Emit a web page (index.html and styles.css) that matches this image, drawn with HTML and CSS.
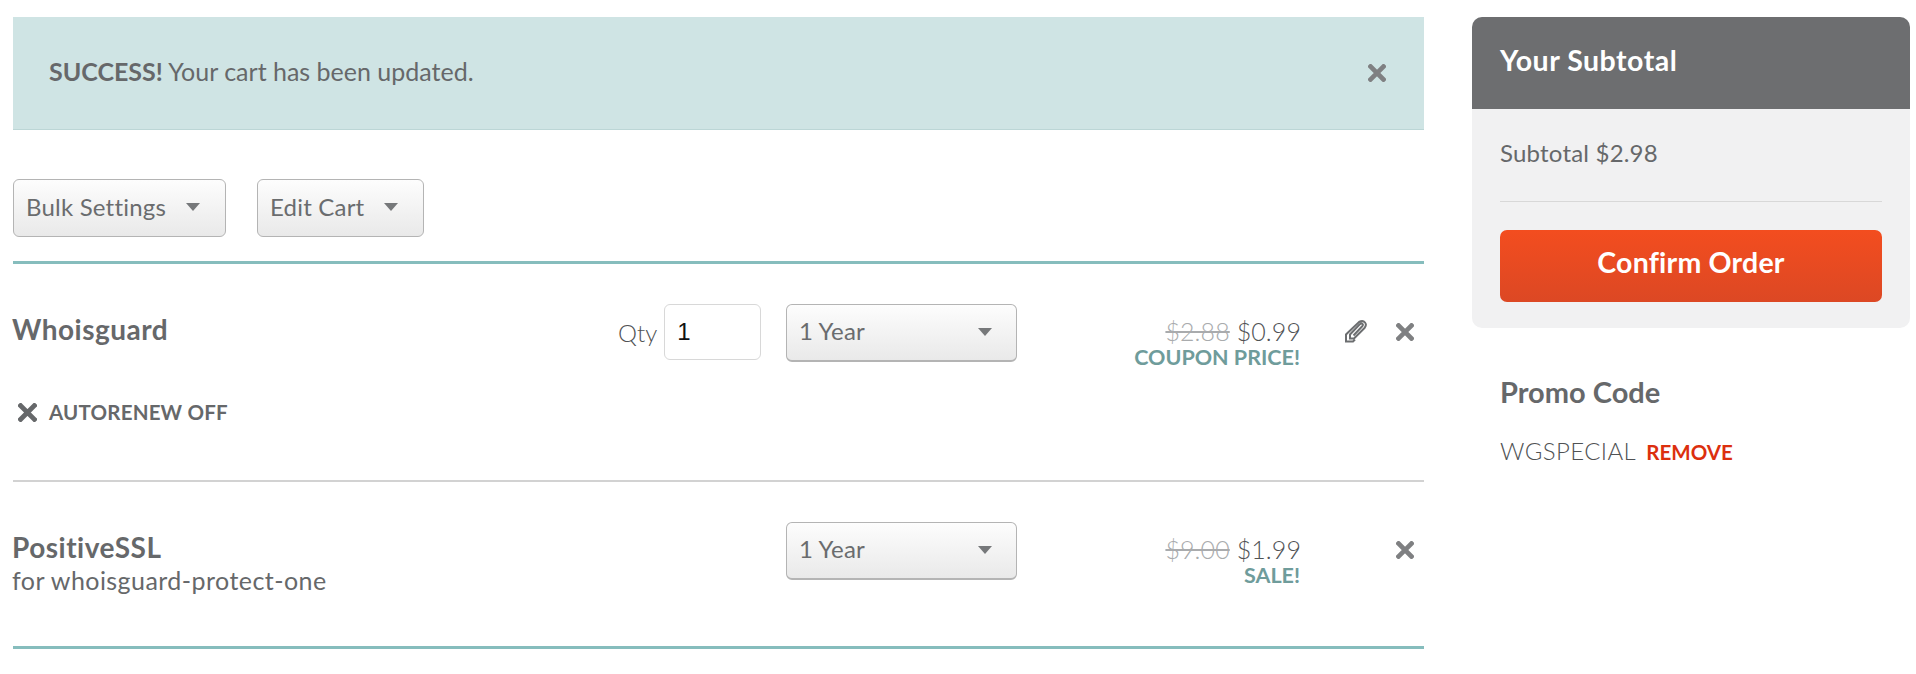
FILE: index.html
```html
<!DOCTYPE html>
<html lang="en">
<head>
<meta charset="utf-8">
<title>Cart</title>
<link rel="stylesheet" href="styles.css">
</head>
<body>
<div class="page">
  <main class="main">
    <div class="alert">
      <p class="alert-text"><strong>SUCCESS!</strong> Your cart has been updated.</p>
      <svg class="icon-x alert-close" viewBox="0 0 18 18"><path d="M2.500 2.500 15.500 15.500M15.500 2.500 2.500 15.500"/></svg>
    </div>
    <div class="toolbar">
      <button class="drop bulk">Bulk Settings<span class="caret"></span></button>
      <button class="drop edit">Edit Cart<span class="caret"></span></button>
    </div>
    <section class="cart">
      <div class="row row-first">
        <div class="name-cell">
          <h3 class="name">Whoisguard</h3>
          <div class="renew"><svg class="icon-x renew-x" viewBox="0 0 18 18"><path d="M2.500 2.500 15.500 15.500M15.500 2.500 2.500 15.500"/></svg>AUTORENEW OFF</div>
        </div>
        <div class="qty-cell"><label class="qty-label">Qty</label><input class="qty" value="1"></div>
        <button class="drop period">1 Year<span class="caret"></span></button>
        <div class="price">
          <div class="price-line"><s>$2.88</s> $0.99</div>
          <div class="price-tag">COUPON PRICE!</div>
        </div>
        <div class="actions">
          <svg class="icon-clip" viewBox="0 0 24 24"><path d="M9.500 15.500 18 6.500Q19.500 5 18.500 4T15.500 4.500L6 14.500 6 18.500 10 18.500 20.500 8Q23 5 21 2.500T15 2L3.500 13 2 14.500V21.500H9L11 19.500"/></svg>
          <svg class="icon-x" viewBox="0 0 18 18"><path d="M2.500 2.500 15.500 15.500M15.500 2.500 2.500 15.500"/></svg>
        </div>
      </div>
      <div class="row row-second">
        <div class="name-cell">
          <h3 class="name">PositiveSSL</h3>
          <div class="sub">for whoisguard-protect-one</div>
        </div>
        <div class="qty-cell"></div>
        <button class="drop period">1 Year<span class="caret"></span></button>
        <div class="price">
          <div class="price-line"><s>$9.00</s> $1.99</div>
          <div class="price-tag">SALE!</div>
        </div>
        <div class="actions">
          <svg class="icon-x" viewBox="0 0 18 18"><path d="M2.500 2.500 15.500 15.500M15.500 2.500 2.500 15.500"/></svg>
        </div>
      </div>
    </section>
  </main>
  <aside class="side">
    <div class="card">
      <h2 class="card-head">Your Subtotal</h2>
      <div class="card-body">
        <p class="subtotal">Subtotal $2.98</p>
        <button class="confirm">Confirm Order</button>
      </div>
    </div>
    <div class="promo">
      <h3 class="promo-title">Promo Code</h3>
      <p class="promo-code">WGSPECIAL <a class="remove">REMOVE</a></p>
    </div>
  </aside>
</div>
</body>
</html>
```
FILE: styles.css
```css
* { box-sizing: border-box; }
html, body { margin: 0; background: #fff; }
body { font-family: Lato, "Open Sans", sans-serif; color: #66686a; height: 674px; overflow: hidden; }
p, h2, h3 { margin: 0; }
.page { display: flex; gap: 48px; padding: 17px 6px 0 13px; }
.main { width: 1411px; flex: none; }
.side { width: 438px; flex: none; }

.alert { height: 113px; background: #cfe4e4; border-bottom: 1px solid #bcd6d6; display: flex; align-items: center; justify-content: space-between; padding: 0 38px 0 36px; }
.alert-text { font-size: 25px; line-height: 30px; padding-bottom: 4px; }
.alert-text strong { font-weight: 700; }
.alert-close { width: 22px; height: 22px; }

.icon-x { width: 18px; height: 18px; fill: none; stroke: #7f8082; stroke-width: 4.600; stroke-linecap: square; flex: none; }
.icon-clip { width: 24px; height: 24px; fill: none; stroke: #6c6e70; stroke-width: 2; flex: none; }

.toolbar { display: flex; gap: 31px; padding: 49px 0 24px; border-bottom: 3px solid #86bdbd; }
.drop { display: flex; align-items: center; justify-content: space-between; height: 58px; border: 1px solid #b4b4b4; border-radius: 6px; background: linear-gradient(#fdfdfd, #e9e9e9); font: 400 24px Lato, sans-serif; letter-spacing: .2px; color: #6a6c6e; padding: 0 15px 4px 13px; }
.caret { width: 0; height: 0; border-left: 7.500px solid transparent; border-right: 7.500px solid transparent; border-top: 8px solid #76787a; margin-top: 2px; }
.bulk { width: 213px; padding-left: 12px; padding-right: 25px; }
.edit { width: 167px; padding-left: 12px; padding-right: 25px; }
.period { width: 231px; border-bottom-width: 2px; padding-left: 12px; padding-right: 24px; }

.row { display: grid; grid-template-columns: 605px 168px 231px 283px 124px; padding-top: 40px; align-items: start; }
.row-first { height: 218px; border-bottom: 2px solid #d2d2d2; }
.row-second { height: 167px; border-bottom: 3px solid #86bdbd; }
.name { font-size: 28px; line-height: 34px; font-weight: 700; letter-spacing: .5px; margin: 8px 0 0 -1px; }
.sub { font-size: 25px; line-height: 30px; font-weight: 400; letter-spacing: .45px; margin: 1px 0 0 -1px; }
.qty-cell { display: flex; align-items: center; gap: 7px; }
.qty-label { font-size: 24px; font-weight: 300; color: #505254; }
.qty { width: 97px; height: 56px; border: 1px solid #d8d8d8; border-radius: 6px; padding: 0 12px; font: 400 24px "Liberation Sans", sans-serif; color: #111; outline: none; }
.price { text-align: right; margin-top: 12px; }
.price-line { font-size: 25px; line-height: 30px; font-weight: 300; letter-spacing: .1px; color: #505254; margin-right: -1px; }
.price-line s { color: #a9abad; }
.price-tag { font-size: 21.500px; line-height: 24px; font-weight: 700; color: #6f9c9b; margin-top: -1px; }
.actions { display: flex; justify-content: flex-end; align-items: center; gap: 28px; height: 56px; padding: 0 10px 0 0; }
.renew { display: flex; align-items: center; gap: 12px; margin: 53px 0 0 5px; font-size: 20.500px; line-height: 26px; font-weight: 700; letter-spacing: .2px; }
.renew-x { width: 19px; height: 19px; stroke: #66686a; }

.card { background: #f1f1f2; border-radius: 10px; overflow: hidden; height: 311px; }
.card-head { height: 92px; background: #6d6e70; color: #fff; font-size: 28.500px; font-weight: 700; line-height: 86px; padding-left: 28px; letter-spacing: .5px; }
.card-body { padding: 0 28px; }
.subtotal { font-size: 24px; line-height: 30px; font-weight: 400; letter-spacing: .2px; padding: 29px 0 24px; border-bottom: 1px solid #d8d8d8; height: 93px; }
.confirm { display: block; width: 100%; height: 72px; margin-top: 28px; border: 0; border-radius: 7px; background: linear-gradient(#f34d1f, #dc4824); color: #fff; font: 700 28.500px Lato, sans-serif; letter-spacing: .2px; padding-bottom: 10px; }
.promo { padding: 47px 28px 0; }
.promo-title { font-size: 29px; line-height: 34px; font-weight: 700; }
.promo-code { font-size: 24px; line-height: 30px; font-weight: 300; margin-top: 27px; letter-spacing: .4px; color: #505254; }
.remove { color: #dc2f0e; font-size: 20.500px; font-weight: 700; margin-left: 4px; letter-spacing: 0; }
```
